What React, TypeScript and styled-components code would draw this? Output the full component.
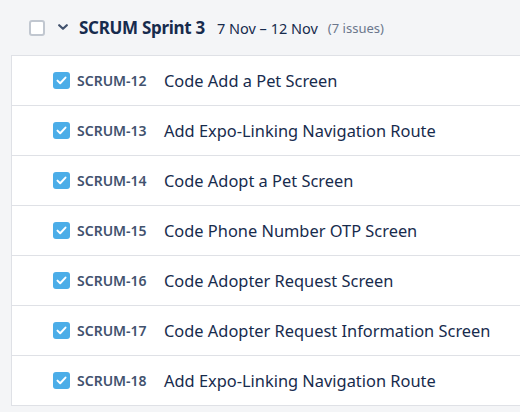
import styled, { createGlobalStyle } from "styled-components";

const GlobalStyle = createGlobalStyle`
  body {
    margin: 0;
    background: #f4f5f7;
    font-family: "Noto Sans", "Open Sans", sans-serif;
    color: #172b4d;
  }
`;

const Page = styled.div`
  display: flex;
  flex-direction: column;
  padding: 0 0 0 11px;
  width: 520px;
  height: 412px;
  box-sizing: border-box;
  overflow: hidden;
`;

const Header = styled.div`
  display: flex;
  align-items: center;
  height: 55px;
  padding-left: 18px;
`;

const EmptyBox = styled.span`
  width: 16px;
  height: 16px;
  box-sizing: border-box;
  border: 2px solid #c1c7d0;
  border-radius: 3px;
  background: #fff;
  margin-right: 13px;
`;

const Chevron = styled.svg`
  width: 10px;
  height: 6px;
  margin-right: 11px;
  margin-top: -2px;
`;

const Title = styled.span`
  font-size: 17px;
  font-weight: 700;
  letter-spacing: -0.3px;
  margin-right: 12px;
`;

const Dates = styled.span`
  font-size: 14.5px;
  color: #172b4d;
  margin-right: 10px;
`;

const Count = styled.span`
  font-size: 13px;
  color: #6b778c;
`;

const List = styled.div`
  display: flex;
  flex-direction: column;
  background: #fff;
  border-top: 1px solid #dfe1e6;
  border-left: 1px solid #dfe1e6;
  border-bottom: 1px solid #dfe1e6;
`;

const Row = styled.div`
  display: flex;
  align-items: center;
  height: 49px;
  padding-left: 41px;
  & + & {
    border-top: 1px solid #dfe1e6;
  }
`;

const CheckedBox = styled.span`
  display: flex;
  align-items: center;
  justify-content: center;
  width: 17px;
  height: 17px;
  border-radius: 3px;
  background: #4bade8;
  margin-right: 7px;
`;

const Key = styled.span`
  font-size: 14px;
  font-weight: 600;
  color: #42526e;
  width: 87px;
`;

const Summary = styled.span`
  font-size: 16.4px;
  color: #172b4d;
  white-space: nowrap;
`;

const issues = [
  { key: "SCRUM-12", summary: "Code Add a Pet Screen" },
  { key: "SCRUM-13", summary: "Add Expo-Linking Navigation Route" },
  { key: "SCRUM-14", summary: "Code Adopt a Pet Screen" },
  { key: "SCRUM-15", summary: "Code Phone Number OTP Screen" },
  { key: "SCRUM-16", summary: "Code Adopter Request Screen" },
  { key: "SCRUM-17", summary: "Code Adopter Request Information Screen" },
  { key: "SCRUM-18", summary: "Add Expo-Linking Navigation Route" },
];

const App = () => {
  return (
    <>
      <GlobalStyle />
      <Page>
        <Header>
          <EmptyBox />
          <Chevron viewBox="0 0 10 6">
            <path
              d="M1.2 1.2 L5 4.8 L8.8 1.2"
              fill="none"
              stroke="#42526e"
              strokeWidth="2.2"
              strokeLinecap="round"
              strokeLinejoin="round"
            />
          </Chevron>
          <Title>SCRUM Sprint 3</Title>
          <Dates>7 Nov – 12 Nov</Dates>
          <Count>(7 issues)</Count>
        </Header>
        <List>
          {issues.map((issue) => (
            <Row key={issue.key}>
              <CheckedBox>
                <svg width="11" height="9" viewBox="0 0 11 9">
                  <path
                    d="M1.5 4.6 L4.2 7.2 L9.5 1.6"
                    fill="none"
                    stroke="#fff"
                    strokeWidth="2"
                    strokeLinecap="round"
                    strokeLinejoin="round"
                  />
                </svg>
              </CheckedBox>
              <Key>{issue.key}</Key>
              <Summary>{issue.summary}</Summary>
            </Row>
          ))}
        </List>
      </Page>
    </>
  );
};

export default App;
